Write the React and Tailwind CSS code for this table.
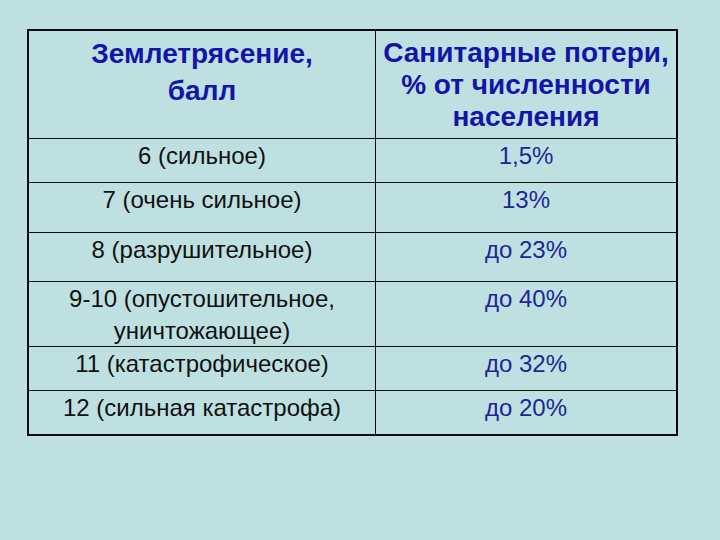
import React from "react";

const rows = [
  { h: "h-[44px]", left: ["6 (сильное)"], right: "1,5%" },
  { h: "h-[50px]", left: ["7 (очень сильное)"], right: "13%" },
  { h: "h-[49px]", left: ["8 (разрушительное)"], right: "до 23%" },
  { h: "h-[65px]", left: ["9-10 (опустошительное,", "уничтожающее)"], right: "до 40%" },
  { h: "h-[44px]", left: ["11 (катастрофическое)"], right: "до 32%" },
  { h: "h-[43px]", left: ["12 (сильная катастрофа)"], right: "до 20%", last: true },
];

export default function App() {
  return (
    <div
      className="w-[720px] h-[540px] bg-[#bfe0e1] overflow-hidden pt-[29px] pl-[27px]"
      style={{ fontFamily: '"Liberation Sans", Arial, sans-serif' }}
    >
      <div className="w-[651px] border-2 border-[#0a0a0a] flex flex-col">
        <div className="flex h-[108px] border-b border-[#0a0a0a]">
          <div className="w-[346px] pt-[4px] text-center text-[28px] leading-[37px] font-bold text-[#1414a8]">
            <div>Землетрясение,</div>
            <div>балл</div>
          </div>
          <div className="flex-1 border-l border-[#0a0a0a] pt-[6px] text-center text-[28px] leading-[32px] font-bold text-[#1414a8]">
            <div>Санитарные потери,</div>
            <div>% от численности</div>
            <div>населения</div>
          </div>
        </div>
        {rows.map((r, i) => (
          <div
            key={i}
            className={`flex ${r.h} ${r.last ? "" : "border-b border-[#0a0a0a]"}`}
          >
            <div className="w-[346px] pt-[1px] text-center text-[24px] leading-[32px] text-[#111111]">
              {r.left.map((t, j) => (
                <div key={j}>{t}</div>
              ))}
            </div>
            <div className="flex-1 border-l border-[#0a0a0a] pt-[1px] text-center text-[24px] leading-[32px] text-[#1c2696]">
              {r.right}
            </div>
          </div>
        ))}
      </div>
    </div>
  );
}
